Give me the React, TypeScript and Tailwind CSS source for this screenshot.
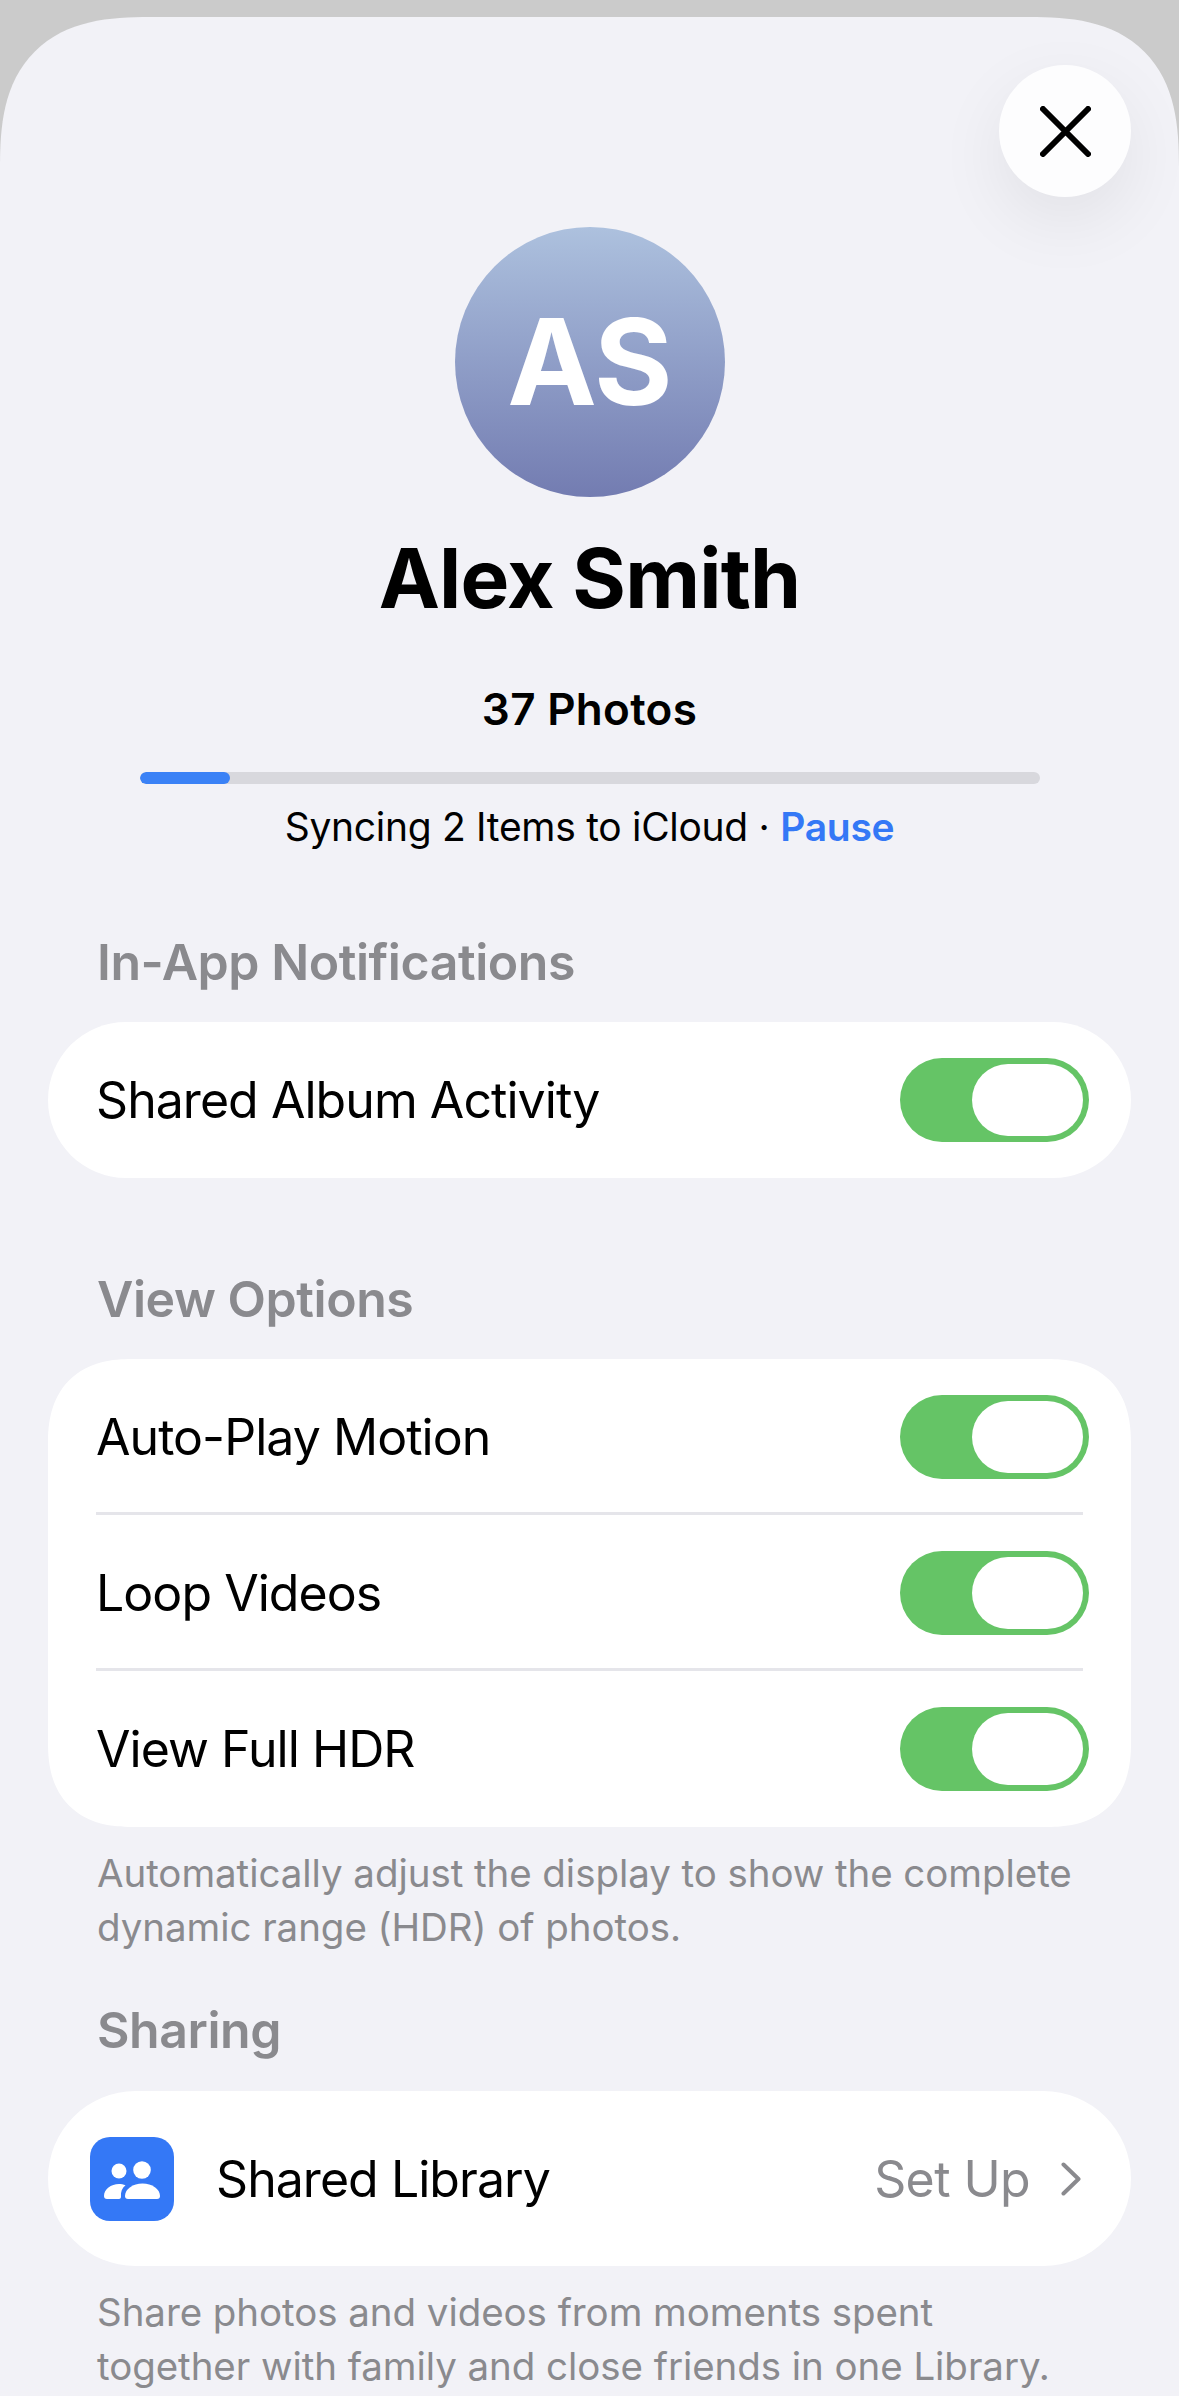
import React from 'react';

const font = { fontFamily: 'Inter, "Liberation Sans", sans-serif' };

const Toggle: React.FC = () => (
  <div className="-mr-[6px] flex h-[84px] w-[189px] shrink-0 items-center justify-end rounded-full bg-[#65c466] pr-[6px]">
    <div className="h-[72px] w-[111px] rounded-full bg-white" />
  </div>
);

const SectionTitle: React.FC<{ title: string; className?: string }> = ({ title, className }) => (
  <h2 className={`pl-[97px] text-[50px] leading-[60px] font-semibold tracking-[-0.45px] text-[#8a8a8e] ${className ?? ''}`}>
    {title}
  </h2>
);

const ToggleRow: React.FC<{ label: string; divider?: boolean }> = ({ label, divider }) => (
  <div className={`mx-[48px] flex h-[156px] items-center justify-between ${divider ? 'shadow-[inset_0_-3px_0_#e5e5ea]' : ''}`}>
    <span className="text-[50px] leading-[60px] tracking-[-0.95px] text-black">{label}</span>
    <Toggle />
  </div>
);

const SharedLibraryIcon: React.FC = () => (
  <div className="h-[84px] w-[84px] shrink-0 rounded-[20px] bg-[#3478f6]">
    <svg width="84" height="84" viewBox="0 0 84 84" fill="white">
      <circle cx="29" cy="34" r="7.5" />
      <circle cx="52" cy="33" r="8.8" />
      <path d="M14 59C14 52 21 47 29 47C31 47 33.5 47.4 35.5 48.3C32 51 30.5 55 31 59.5C31 61 30.5 62 29 62H17C15 62 14 61 14 59Z" />
      <path d="M35 59C35 52 43 46.5 52.5 46.5S70 52 70 59C70 61 69 62 67 62H38C36 62 35 61 35 59Z" />
    </svg>
  </div>
);

const App: React.FC = () => {
  return (
    <div className="h-[2396px] w-[1179px] overflow-hidden bg-[#cbcbcb] pt-[17px]" style={font}>
      <div className="relative flex h-full flex-col rounded-t-[150px] bg-[#f2f2f7] [corner-shape:superellipse(1.4)]">
        {/* Close button */}
        <button className="absolute top-[48px] left-[999px] flex h-[132px] w-[132px] items-center justify-center rounded-full bg-[#fdfdfe] shadow-[0_24px_70px_rgba(0,0,0,0.07)]">
          <svg width="51" height="51" viewBox="0 0 51 51" fill="none" stroke="black" strokeWidth="6" strokeLinecap="round">
            <path d="M3 3 L48 48 M48 3 L3 48" />
          </svg>
        </button>

        {/* Profile header */}
        <div className="flex flex-col items-center pt-[210px]">
          <div className="flex h-[270px] w-[270px] items-center justify-center rounded-full bg-gradient-to-b from-[#adc1de] to-[#737cb1]">
            <span className="text-[120px] leading-none font-bold tracking-[-1px] text-white">AS</span>
          </div>
          <h1 className="mt-[32px] text-[82px] leading-[100px] font-bold tracking-[-0.8px] text-black">Alex Smith</h1>
          <p className="mt-[53px] text-[44px] leading-[54px] font-semibold tracking-[0.3px] text-black">37 Photos</p>
          <div className="mt-[36px] h-[12px] w-[900px] overflow-hidden rounded-full bg-[#d8d8dd]">
            <div className="h-full w-[90px] rounded-full bg-[#3b82f6]" />
          </div>
          <p className="mt-[18px] text-[39px] leading-[50px] tracking-[-0.3px] text-black">
            Syncing 2 Items to iCloud · <span className="font-semibold text-[#3478f6]">Pause</span>
          </p>
        </div>

        <SectionTitle title="In-App Notifications" className="mt-[80px]" />
        <div className="mx-[48px] mt-[30px] rounded-full bg-white">
          <ToggleRow label="Shared Album Activity" />
        </div>

        <SectionTitle title="View Options" className="mt-[91px]" />
        <div className="mx-[48px] mt-[30px] rounded-[84px] bg-white [corner-shape:superellipse(1.25)]">
          <ToggleRow label="Auto-Play Motion" divider />
          <ToggleRow label="Loop Videos" divider />
          <ToggleRow label="View Full HDR" />
        </div>
        <p className="mt-[19px] pr-[97px] pl-[97px] text-[38.5px] leading-[54px] tracking-[-0.06px] text-[#8a8a8e]">
          Automatically adjust the display to show the complete dynamic range (HDR) of photos.
        </p>

        <SectionTitle title="Sharing" className="mt-[46px]" />
        <div className="mx-[48px] mt-[31px] flex h-[175px] items-center rounded-full bg-white pr-[50px] pl-[42px]">
          <SharedLibraryIcon />
          <span className="ml-[42px] text-[50px] leading-[60px] tracking-[-0.95px] text-black">Shared Library</span>
          <span className="ml-auto text-[50px] leading-[60px] tracking-[-0.6px] text-[#8a8a8e]">Set Up</span>
          {/* Disclosure chevron */}
          <svg className="ml-[31px]" width="20" height="34" viewBox="0 0 20 34" fill="none" stroke="#8a8a8e" strokeWidth="4" strokeLinecap="round" strokeLinejoin="round">
            <path d="M2.5 2.5 L17.5 17 L2.5 31.5" />
          </svg>
        </div>
        <p className="mt-[19px] pr-[97px] pl-[97px] text-[38.5px] leading-[54px] tracking-[-0.06px] text-[#8a8a8e]">
          Share photos and videos from moments spent together with family and close friends in one Library.
        </p>
      </div>
    </div>
  );
};

export default App;
